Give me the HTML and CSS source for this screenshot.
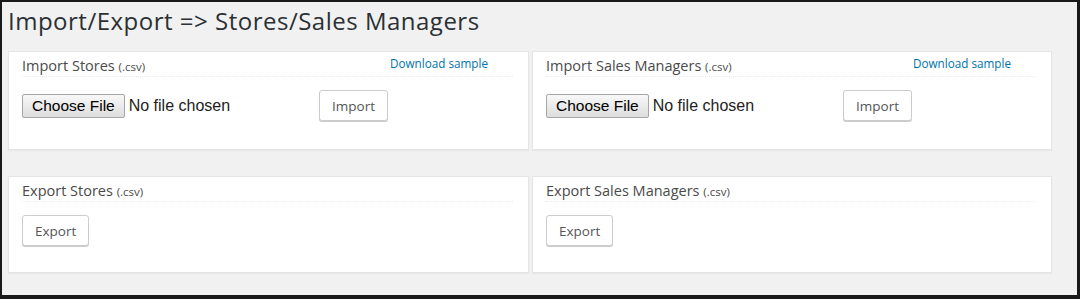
FILE: index.html
```html
<!DOCTYPE html>
<html lang="en">
<head>
    <meta charset="UTF-8">
    <meta name="viewport" content="width=device-width, initial-scale=1.0">
    <title>Import/Export</title>
    <link rel="stylesheet" href="styles.css">
</head>
<body>
    <div class="frame">
        <h1 class="page-title">Import/Export =&gt; Stores/Sales Managers</h1>

        <div class="grid">
            <div class="panel">
                <div class="panel-head">
                    <span class="panel-title">Import Stores <small>(.csv)</small></span>
                    <a class="sample" href="#">Download sample</a>
                </div>
                <div class="panel-body">
                    <input class="file" type="file" name="stores">
                    <button class="btn" type="button">Import</button>
                </div>
            </div>

            <div class="panel">
                <div class="panel-head">
                    <span class="panel-title">Import Sales Managers <small>(.csv)</small></span>
                    <a class="sample" href="#">Download sample</a>
                </div>
                <div class="panel-body">
                    <input class="file" type="file" name="managers">
                    <button class="btn" type="button">Import</button>
                </div>
            </div>

            <div class="panel panel-short">
                <div class="panel-head">
                    <span class="panel-title">Export Stores <small>(.csv)</small></span>
                </div>
                <div class="panel-body">
                    <button class="btn" type="button">Export</button>
                </div>
            </div>

            <div class="panel panel-short">
                <div class="panel-head">
                    <span class="panel-title">Export Sales Managers <small>(.csv)</small></span>
                </div>
                <div class="panel-body">
                    <button class="btn" type="button">Export</button>
                </div>
            </div>
        </div>
    </div>
</body>
</html>
```

FILE: styles.css
```css
body {
    margin: 0;
    font-family: "Open Sans", Arial, sans-serif;
    color: #23282d;
}

.frame {
    width: 1080px;
    height: 299px;
    box-sizing: border-box;
    border-style: solid;
    border-color: #1a1a1a;
    border-width: 2px 3px 4px 2px;
    background: #f1f1f1;
    padding-left: 6px;
    overflow: hidden;
}

.page-title {
    margin: 0;
    padding-top: 4px;
    font-size: 24px;
    font-weight: 400;
    letter-spacing: 0.5px;
    line-height: 30px;
    color: #2b3035;
}

.grid {
    display: grid;
    grid-template-columns: 521px 520px;
    column-gap: 3px;
    row-gap: 26px;
    margin-top: 15px;
}

.panel {
    background: #fff;
    border: 1px solid #e5e5e5;
    box-shadow: 0 1px 1px rgba(0, 0, 0, 0.04);
    height: 97px;
    padding: 0 15px 0 13px;
}

.panel-short {
    height: 95px;
}

.panel-head {
    display: flex;
    justify-content: space-between;
    align-items: flex-start;
    padding-top: 4px;
    height: 20px;
    border-bottom: 1px dotted #eaeaea;
}

.panel-title {
    font-size: 14.5px;
    line-height: 19px;
    color: #4a4a4a;
}

.panel-title small {
    font-size: 11.5px;
}

.sample {
    font-size: 11.7px;
    line-height: 14px;
    color: #0073aa;
    text-decoration: none;
    margin-right: 25px;
}

.panel-body {
    display: flex;
    align-items: center;
    padding-top: 13px;
}

.file {
    width: 297px;
    font-family: Arial, "Liberation Sans", sans-serif;
    font-size: 16px;
    color: #222;
}

.file::file-selector-button {
    font-family: Arial, "Liberation Sans", sans-serif;
    font-size: 15.5px;
    height: 24px;
    padding: 0 9px;
    margin-right: 4px;
    border: 1px solid #a6a6a6;
    border-radius: 2px;
    background: linear-gradient(#f8f8f8, #dddddd);
    color: #000;
}

.btn {
    height: 31px;
    padding: 0 12px;
    font-family: "Open Sans", Arial, sans-serif;
    font-size: 13.5px;
    color: #555;
    background: #fff;
    border: 1px solid #ccc;
    border-radius: 3px;
    box-shadow: 0 1px 0 #ccc;
}
```
